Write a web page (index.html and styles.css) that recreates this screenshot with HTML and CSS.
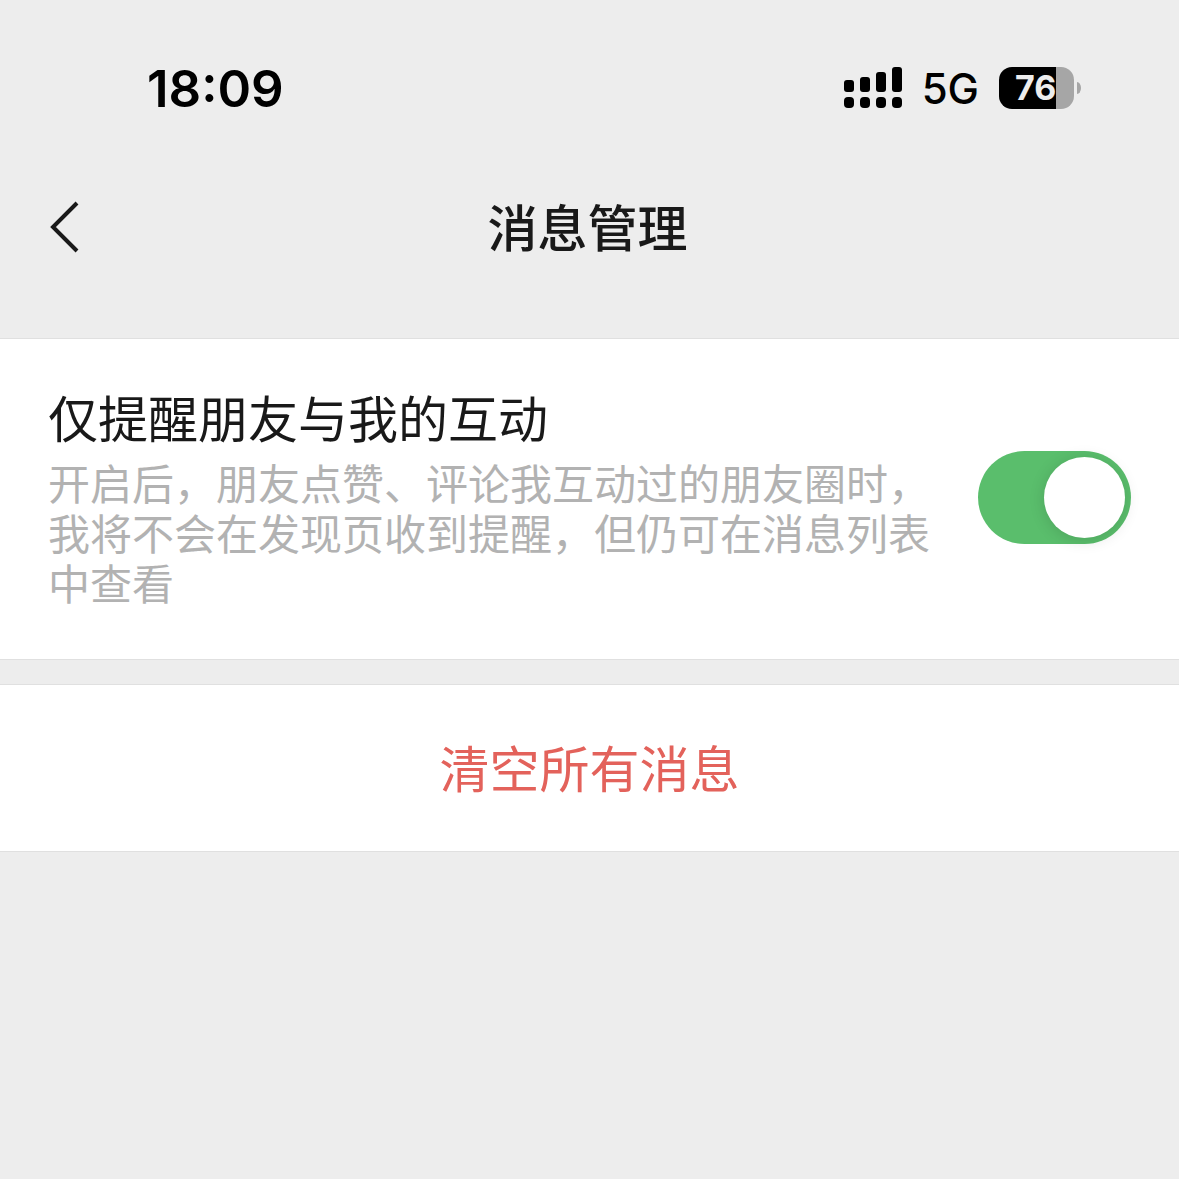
FILE: index.html
```html
<!DOCTYPE html>
<html lang="zh-CN">
<head>
<meta charset="utf-8">
<meta name="viewport" content="width=device-width, initial-scale=1">
<title>消息管理</title>
<link rel="stylesheet" href="styles.css">
</head>
<body>
<div class="status">
  <time class="clock">18:09</time>
  <div class="indicators">
    <svg class="signal" width="58" height="42" viewBox="0 0 58 42" aria-hidden="true">
      <rect x="0" y="13" width="10" height="12" rx="3"/>
      <rect x="16" y="10" width="10" height="15" rx="3"/>
      <rect x="32" y="5" width="10" height="20" rx="3"/>
      <rect x="48" y="0" width="10" height="25" rx="3"/>
      <rect x="0" y="30" width="10" height="11" rx="4"/>
      <rect x="16" y="30" width="10" height="11" rx="4"/>
      <rect x="32" y="30" width="10" height="11" rx="4"/>
      <rect x="48" y="30" width="10" height="11" rx="4"/>
    </svg>
    <span class="network">5G</span>
    <div class="battery"><span class="level">76</span></div>
  </div>
</div>
<header class="nav">
  <button class="back" type="button" aria-label="返回">
    <svg width="30" height="52" viewBox="0 0 30 52" aria-hidden="true"><path d="M27 2 3 26l24 24"/></svg>
  </button>
  <h1 class="title">消息管理</h1>
</header>
<main>
  <section class="group setting">
    <div class="copy">
      <label class="name" for="friends-only">仅提醒朋友与我的互动</label>
      <p class="hint" id="hint">开启后，朋友点赞、评论我互动过的朋友圈时，我将不会在发现页收到提醒，但仍可在消息列表中查看</p>
    </div>
    <input class="switch" type="checkbox" id="friends-only" aria-describedby="hint" checked>
  </section>
  <section class="group">
    <button class="clear" type="button">清空所有消息</button>
  </section>
</main>
</body>
</html>
```

FILE: styles.css
```css
* {
  box-sizing: border-box;
}

body {
  margin: 0;
  background: #ededed;
  color: #191919;
  font-family: Inter, "Noto Sans CJK SC", sans-serif;
}

.status {
  display: flex;
  align-items: center;
  justify-content: space-between;
  height: 176px;
  padding: 0 105px 0 147px;
  color: #000;
}

.clock {
  font-size: 51px;
  font-weight: 600;
}

.indicators {
  display: flex;
  align-items: center;
  gap: 20px;
}

.network {
  font-size: 42px;
  font-weight: 500;
  line-height: 52px;
  padding-top: 2px;
}

.battery {
  position: relative;
  width: 75px;
  height: 42px;
  border-radius: 13px;
  background: linear-gradient(90deg, #000 76%, #a6a6a6 76%);
}

.battery::after {
  content: "";
  position: absolute;
  left: 78px;
  top: 15px;
  width: 4px;
  height: 12px;
  border-radius: 0 4px 4px 0 / 0 6px 6px 0;
  background: #a6a6a6;
}

.level {
  display: block;
  padding-left: 16px;
  color: #ededed;
  font-size: 34px;
  font-weight: 700;
  line-height: 42px;
}

.nav {
  display: grid;
  grid-template-columns: 78px 1fr 82px;
  align-items: center;
  height: 102px;
  margin-bottom: 60px;
}

.back {
  display: flex;
  padding: 0 0 0 50px;
  border: 0;
  background: none;
}

.back svg {
  flex: none;
  fill: none;
  stroke: #191919;
  stroke-width: 4;
}

.title {
  margin: 0;
  padding-top: 4px;
  font-size: 50px;
  font-weight: 500;
  line-height: 72px;
  text-align: center;
}

.group {
  margin-bottom: 24px;
  border: solid #e0e0e0;
  border-width: 1px 0;
  background: #fff;
}

.setting {
  display: flex;
  align-items: center;
  justify-content: space-between;
  gap: 32px;
  padding: 45px 48px 49px;
}

.copy {
  max-width: 896px;
}

.name {
  display: block;
  font-size: 50px;
  line-height: 72px;
}

.hint {
  margin: 4px 0 0;
  color: #b2b2b2;
  font-size: 42px;
  line-height: 50px;
}

.switch {
  appearance: none;
  flex: none;
  display: flex;
  align-items: center;
  width: 153px;
  height: 93px;
  margin: 0;
  padding: 6px;
  border-radius: 47px;
  background: #d8d8d8;
}

.switch::before {
  content: "";
  width: 81px;
  height: 81px;
  border-radius: 50%;
  background: #fff;
  box-shadow: 0 2px 16px rgba(0, 0, 0, 0.14);
}

.switch:checked {
  justify-content: flex-end;
  background: #5abe6c;
}

.clear {
  display: block;
  width: 100%;
  padding: 49px 0 45px;
  border: 0;
  background: none;
  color: #e3625b;
  font-family: inherit;
  font-size: 50px;
  line-height: 72px;
}
```
